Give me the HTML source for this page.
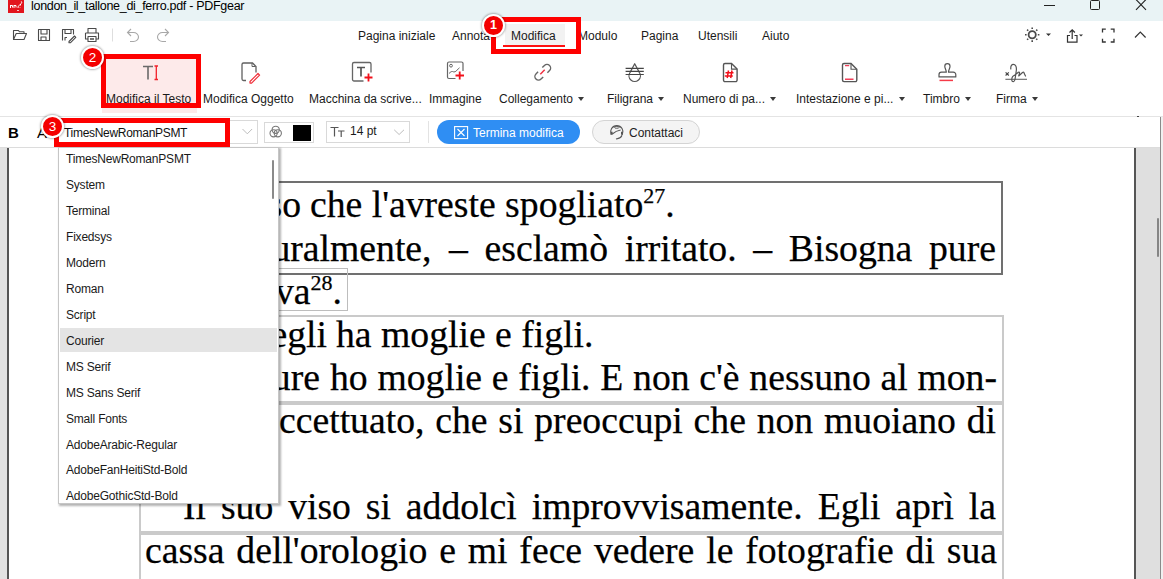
<!DOCTYPE html>
<html><head><meta charset="utf-8">
<style>
*{box-sizing:border-box;margin:0;padding:0}
html,body{width:1163px;height:579px;overflow:hidden;background:#fff;font-family:"Liberation Sans",sans-serif;color:#1f1f1f}
.a{position:absolute}
svg.a{overflow:visible}
.t{position:absolute;white-space:nowrap;font-size:12px;line-height:14px;color:#1a1a1a}
.tab{top:29px}
.lbl{top:92px}
.arr{display:inline-block;width:0;height:0;border-left:3.2px solid transparent;border-right:3.2px solid transparent;border-top:4px solid #3a3a3a;vertical-align:middle;position:relative;top:-1px;margin-left:2px}
.serif{font-family:"Liberation Serif",serif;font-size:37.7px;color:#000;position:absolute;white-space:nowrap;line-height:43px;-webkit-text-stroke:0.25px #000}
.jl{text-align:justify;text-align-last:justify}
.sup{font-size:22px;vertical-align:top;line-height:22px;position:relative;top:2px}
.box{position:absolute;border:1px solid #c8c8c8}
.dd{font-size:12px;position:absolute;left:66px;white-space:nowrap;line-height:14px;color:#1a1a1a;letter-spacing:-0.2px}
.badge{position:absolute;width:23px;height:23px;border-radius:50%;background:#f40000;border:2px solid #fff;box-shadow:0 0 2px 1px rgba(0,0,0,.28);color:#fff;font-size:13.5px;line-height:19px;text-align:center}
.redbox{position:absolute;border:5px solid #fe0000}
</style></head><body>
<!-- title bar -->
<div class="a" style="left:0;top:0;width:1163px;height:21px;background:#e9f3f5"></div>
<div class="a" style="left:8px;top:0;width:16px;height:13px;background:#e2151d"></div>
<svg class="a" style="left:8px;top:0" width="16" height="13"><path d="M2.5 5v3M2.5 5.5h2v2M6 5v3M6 5.5h2v2M10 8c0-2 1-3 2-3M13 1.5c1 0 1 2 -0.5 2.5v1.5M12 7v.5M9.5 10.5h1M10 10v1" stroke="#fff" stroke-width="1" fill="none"/></svg>
<div class="t" style="left:31px;top:-1px;font-size:12.5px;color:#000;letter-spacing:-0.3px">london_il_tallone_di_ferro.pdf - PDFgear</div>
<div class="a" style="left:1044px;top:5px;width:11px;height:1px;background:#222"></div>
<div class="a" style="left:1090px;top:0px;width:10px;height:10px;border:1px solid #222;border-radius:1.5px"></div>
<svg class="a" style="left:1134px;top:-2px" width="14" height="14"><path d="M2 1.5 L12 11.8 M12 1.5 L2 11.8" stroke="#222" stroke-width="1.1"/></svg>

<!-- menu row icons -->
<svg class="a" style="left:0;top:0" width="180" height="50">
  <g stroke="#4a4a4a" stroke-width="1.1" fill="none" stroke-linejoin="round">
    <path d="M13.5 39.5V30.5h5l1 1.3h4.5v1.7"/>
    <path d="M13.5 39.5l2.7-6h10.3l-2.5 6z"/>
    <path d="M38.5 29.5h11v11h-11z"/>
    <path d="M41 29.5v4.5h6v-4.5M41 40.5v-3.5h5v3.5"/>
    <path d="M62.5 40.5v-11h11v5"/>
    <path d="M65 29.5v4h6v-4M65 40.5v-3h2"/>
    <path d="M69 41.5l5.5-5.5 1.3 1.3-5.5 5.5h-1.3z"/>
    <path d="M88 33v-4.5h8V33M85.5 33h13v6h-2.5M88 39h-2.5v-6M88 36.5h8v5h-8z"/>
    <path d="M90 39h4" stroke-width="1.5"/>
  </g>
  <path d="M112.5 28.5v13" stroke="#dedede" stroke-width="1"/>
  <g stroke="#a8a8a8" stroke-width="1.1" fill="none">
    <path d="M131 29l-3.5 3.5 3.5 3.5M127.5 32.5h6a5 4.5 0 0 1 0 9h-3.5"/>
    <path d="M165 29l3.5 3.5-3.5 3.5M168.5 32.5h-6a5 4.5 0 0 0 0 9h3.5"/>
  </g>
</svg>

<!-- tabs -->
<div class="t tab" style="left:358px">Pagina iniziale</div>
<div class="t tab" style="left:452px">Annota</div>
<div class="a" style="left:505px;top:24px;width:60px;height:23px;background:#f2f2f2"></div>
<div class="t tab" style="left:511px">Modifica</div>
<div class="a" style="left:503px;top:45px;width:62px;height:2px;background:#f11"></div>
<div class="t tab" style="left:578px">Modulo</div>
<div class="t tab" style="left:641px">Pagina</div>
<div class="t tab" style="left:698px">Utensili</div>
<div class="t tab" style="left:762px">Aiuto</div>

<!-- right menu icons -->
<svg class="a" style="left:1015px;top:22px" width="148" height="28">
  <g stroke="#4a4a4a" fill="none" stroke-width="1.3">
    <circle cx="17.2" cy="12.7" r="3.6" stroke-width="1.8"/>
    <path d="M17.2 5.5v1.6M17.2 18.3v1.6M10 12.7h1.6M22.8 12.7h1.6M12.1 7.6l1.1 1.1M21.2 16.7l1.1 1.1M12.1 17.8l1.1-1.1M21.2 8.7l1.1-1.1" stroke-width="1.6"/>
  </g>
  <path d="M31 11.5h5l-2.5 2.5z" fill="#333"/>
  <g stroke="#333" fill="none" stroke-width="1.2">
    <path d="M55 13.5h-2.5v6.7h9.5v-6.7h-2.5"/>
    <path d="M57.2 17v-9M54.5 10.5l2.7-2.7 2.7 2.7"/>
  </g>
  <path d="M64 12.5h4l-2 2z" fill="#333"/>
  <g stroke="#333" fill="none" stroke-width="1.3">
    <path d="M87.5 10.5v-3.3h3.3M95.7 7.2h3.3v3.3M99 16.7v3.3h-3.3M90.8 20h-3.3v-3.3"/>
    <path d="M120 15.5l5.3-5.3 5.3 5.3" stroke-width="1.2"/>
  </g>
</svg>

<!-- ribbon -->
<div class="a" style="left:102px;top:55px;width:95px;height:58px;background:#fdeaea"></div>
<svg class="a" style="left:0;top:50px" width="1163" height="40">
  <!-- TI -->
  <path d="M143 16.5h10M148 16.5v13" stroke="#6a6a6a" stroke-width="1.6" fill="none"/>
  <path d="M154.5 16h3.5M154.5 29.5h3.5M156.3 16v13.5" stroke="#f2202a" stroke-width="1.3" fill="none"/>
  <!-- Modifica oggetto -->
  <path d="M246 30.5h-2.5a1.5 1.5 0 0 1-1.5-1.5V14.5a1.5 1.5 0 0 1 1.5-1.5h9l3.5 3.5v6" stroke="#606060" stroke-width="1.3" fill="none"/>
  <path d="M252 13v3.5h3.5" stroke="#606060" stroke-width="1" fill="none"/>
  <path d="M250 31.5l8-8 1.6 1.6-8 8h-1.6z" stroke="#f0303a" stroke-width="1.2" fill="none" stroke-linejoin="round"/>
  <!-- Macchina -->
  <path d="M363.5 31h-9.5a1.5 1.5 0 0 1-1.5-1.5V14a1.5 1.5 0 0 1 1.5-1.5h15.5a1.5 1.5 0 0 1 1.5 1.5v8.5" stroke="#666" stroke-width="1.3" fill="none"/>
  <path d="M357 17.5h8M361 17.5v9" stroke="#555" stroke-width="1.7" fill="none"/>
  <path d="M364.5 27.5h8M368.5 23.5v8" stroke="#f2101a" stroke-width="1.8" fill="none"/>
  <!-- Immagine -->
  <path d="M455.5 28.5h-6.5a1.5 1.5 0 0 1-1.5-1.5V13.5a1.5 1.5 0 0 1 1.5-1.5h12.5a1.5 1.5 0 0 1 1.5 1.5v7.5" stroke="#666" stroke-width="1.2" fill="none"/>
  <circle cx="451" cy="15.7" r="1.4" stroke="#666" stroke-width="1" fill="none"/>
  <path d="M449 23.5c1.5-1.5 2.5-2.2 3.5-2 1 .3 1.5.7 2.5.3 1-.4 2.5-2.3 4.5-4" stroke="#666" stroke-width="1" fill="none"/>
  <path d="M455.5 25.5h8.5M459.7 21.5v8" stroke="#f2101a" stroke-width="1.8" fill="none"/>
  <!-- link -->
  <path d="M542.3 17.6L544.45 15.45A3.6 3.6 0 0 1 549.55 20.55L547.4 22.7M543.2 26.9L541.05 29.05A3.6 3.6 0 0 1 535.95 23.95L538.1 21.8" stroke="#666" stroke-width="1.4" fill="none"/>
  <path d="M540.3 24.2L544.7 19.8" stroke="#f03040" stroke-width="1.5"/>
  <!-- filigrana -->
  <path d="M634.7 13.7l-4.6 8.7a5.7 5.7 0 1 0 9.2 0z" stroke="#555" stroke-width="1.2" fill="none" stroke-linejoin="round"/>
  <path d="M625.6 18.4h18.2M625.6 21.4h18.2M625.6 24.5h18.2" stroke="#444" stroke-width="1.2"/>
  <!-- numero pagina -->
  <path d="M723.5 15a1.5 1.5 0 0 1 1.5-1.5h6.5l5.6 5.6v11a1.5 1.5 0 0 1-1.5 1.5h-10.6a1.5 1.5 0 0 1-1.5-1.5z" stroke="#555" stroke-width="1.4" fill="none"/>
  <path d="M731.5 13.5v5.6h5.6" stroke="#555" stroke-width="1.1" fill="none"/>
  <path d="M728.5 20.5l-1.3 7.5M732 20.5l-1.3 7.5M725.5 22.7h8M724.8 26h8" stroke="#f2101a" stroke-width="1.5" fill="none"/>
  <!-- intestazione -->
  <path d="M842.5 15a1.5 1.5 0 0 1 1.5-1.5h7l5.8 5.8v10.8a1.5 1.5 0 0 1-1.5 1.5h-11.3a1.5 1.5 0 0 1-1.5-1.5z" stroke="#555" stroke-width="1.4" fill="none"/>
  <path d="M851 13.5v5.8h5.8" stroke="#555" stroke-width="1.1" fill="none"/>
  <path d="M845 15.6h4.2M845 29.3h8.5" stroke="#f0405a" stroke-width="1.4"/>
  <!-- timbro -->
  <path d="M946.3 22.2C946.3 20 944.8 18.5 944.8 16.2A2.6 2.6 0 0 1 950 16.2C950 18.5 948.5 20 948.5 22.2H953.3A2.5 2.5 0 0 1 955.8 24.7V26.9H939V24.7A2.5 2.5 0 0 1 941.5 22.2Z" stroke="#555" stroke-width="1.2" fill="none" stroke-linejoin="round"/>
  <path d="M939.5 30.4h13.5" stroke="#f53a48" stroke-width="1.5"/>
  <!-- firma -->
  <path d="M1005.6 22.3l3.2 3.2M1008.8 22.3l-3.2 3.2" stroke="#444" stroke-width="1.1"/>
  <path d="M1005.4 29.3h21.6" stroke="#666" stroke-width="1.1"/>
  <path d="M1010.8 19C1010.5 15.5 1012 14.3 1013.3 14.3C1015.5 14.3 1016.8 17 1016.3 20.5L1015 29.5C1014.5 32 1012 32.5 1011.8 30C1011.6 27.5 1013.5 25.5 1015.2 24.8L1018.3 22.3C1019.5 21.5 1019.8 22.5 1019.3 24L1018.7 26L1022.5 22.5C1023.5 21.8 1024 22.3 1024.2 23.5L1025.5 26" stroke="#555" stroke-width="1.2" fill="none" stroke-linecap="round" stroke-linejoin="round"/>
</svg>
<div class="t lbl" style="left:106px">Modifica il Testo</div>
<div class="t lbl" style="left:203px">Modifica Oggetto</div>
<div class="t lbl" style="left:309px">Macchina da scrive...</div>
<div class="t lbl" style="left:429px">Immagine</div>
<div class="t lbl" style="left:499px">Collegamento <span class="arr"></span></div>
<div class="t lbl" style="left:607px">Filigrana <span class="arr"></span></div>
<div class="t lbl" style="left:683px">Numero di pa... <span class="arr"></span></div>
<div class="t lbl" style="left:796px">Intestazione e pi... <span class="arr"></span></div>
<div class="t lbl" style="left:923px">Timbro <span class="arr"></span></div>
<div class="t lbl" style="left:996px">Firma <span class="arr"></span></div>

<!-- toolbar -->
<div class="a" style="left:0;top:116px;width:1163px;height:1px;background:#e4e4e4"></div>
<div class="a" style="left:0;top:147px;width:1163px;height:1px;background:#dcdcdc"></div>
<div class="t" style="left:8px;top:124px;font-size:15px;line-height:17px;font-weight:bold;color:#000">B</div>
<div class="t" style="left:37px;top:124px;font-size:15px;line-height:17px;color:#000">A</div>
<div class="a" style="left:57px;top:120px;width:201px;height:24px;border:1px solid #d9d9d9"></div>
<div class="t" style="left:64px;top:126px;color:#111;letter-spacing:-0.3px">TimesNewRomanPSMT</div>
<svg class="a" style="left:0;top:116px" width="420" height="32">
  <path d="M242.5 13l4.8 4.8 4.8-4.8" stroke="#bdbdbd" stroke-width="1" fill="none"/>
  <g stroke="#777" stroke-width="1.1" fill="none"><circle cx="275.7" cy="13.8" r="3.6"/><circle cx="273.6" cy="17.3" r="3.6"/><circle cx="277.8" cy="17.3" r="3.6"/></g>
  <path d="M394.2 13.8l4.9 4.7 4.9-4.7" stroke="#bdbdbd" stroke-width="1" fill="none"/>
  <path d="M330.5 11.5h8M334.5 11.5v9M338 15h6.5M341.2 15v6" stroke="#555" stroke-width="1.2" fill="none"/>
</svg>
<div class="a" style="left:264px;top:122px;width:50px;height:21px;border:1px solid #d9d9d9"></div>
<div class="a" style="left:293px;top:125px;width:18px;height:16px;background:#000"></div>
<div class="a" style="left:326px;top:121px;width:84px;height:22px;border:1px solid #d9d9d9"></div>
<div class="t" style="left:350px;top:124px">14 pt</div>
<div class="a" style="left:428px;top:121px;width:1px;height:22px;background:#e3e3e3"></div>
<div class="a" style="left:437px;top:120px;width:143px;height:24px;border-radius:12px;background:#2f8ef3"></div>
<svg class="a" style="left:454px;top:126px" width="15" height="14"><rect x="0.6" y="0.6" width="13" height="12" fill="none" stroke="#fff" stroke-width="1.1"/><path d="M3.5 3l7 7M10.5 3l-7 7" stroke="#fff" stroke-width="1.1"/></svg>
<div class="t" style="left:473px;top:126px;color:#fff">Termina modifica</div>
<div class="a" style="left:592px;top:120px;width:108px;height:24px;border-radius:12px;background:#f4f4f4;border:1px solid #d4d4d4"></div>
<svg class="a" style="left:609px;top:124px" width="16" height="16"><g stroke="#555" fill="none" stroke-width="1.1"><path d="M2.2 10.5A6.2 6.2 0 1 1 13.4 10.5"/><path d="M2.6 7.8v3M13 7.8v3" stroke-width="2"/><path d="M3.3 10Q7 6.8 11.6 6"/><path d="M13 11.2Q12 14 8.6 14.6l-1.6.4"/><ellipse cx="7.8" cy="3.4" rx="2.4" ry="0.9" stroke-width="0.9"/></g></svg>
<div class="t" style="left:629px;top:126px;color:#222">Contattaci</div>

<!-- document -->
<div class="a" style="left:0;top:148px;width:8px;height:431px;background:#e2e2e2"></div>
<div class="a" style="left:7px;top:148px;width:2px;height:431px;background:#555"></div>
<div class="a" style="left:1134px;top:148px;width:2px;height:431px;background:#555"></div>
<div class="a" style="left:1136px;top:148px;width:24px;height:431px;background:#dfdfdf"></div>
<div class="a" style="left:1160px;top:117px;width:1px;height:462px;background:#8a8a8a"></div>
<div class="a" style="left:1161px;top:117px;width:2px;height:462px;background:#f0f0f0"></div>
<div class="a" style="left:1157px;top:218px;width:2px;height:39px;background:#858585;border-radius:1px"></div>
<div class="a" style="left:1137px;top:116px;width:2px;height:1px;background:#444"></div>

<!-- text boxes -->
<div class="box" style="left:139px;top:181px;width:864px;height:94px;border:2px solid #707070"></div>
<div class="box" style="left:139px;top:268px;width:209px;height:43px;border:1px solid #bdbdbd"></div>
<div class="box" style="left:139px;top:315px;width:865px;height:88px;border:2px solid #cacaca"></div>
<div class="box" style="left:139px;top:401px;width:865px;height:132px;border:2px solid #cacaca;border-top-width:4px"></div>
<div class="box" style="left:139px;top:531px;width:865px;height:60px;border:2px solid #cacaca;border-top-width:4px"></div>

<div class="serif" style="left:310px;top:183px">che l'avreste spogliato<span class="sup">27</span>.</div>
<div class="serif" style="right:862px;top:183px">Penso</div>
<div class="serif" style="right:731.5px;top:227px">Naturalmente,</div>
<div class="serif jl" style="left:449px;width:547px;top:227px">– esclamò irritato. – Bisogna pure</div>
<div class="serif" style="right:821px;top:270px">va<span class="sup">28</span>.</div>
<div class="serif" style="left:336px;top:313px">ha moglie e figli.</div>
<div class="serif" style="right:836px;top:313px">egli</div>
<div class="serif" style="right:843px;top:356px">Pure</div>
<div class="serif jl" style="left:330px;width:667px;top:356px">ho moglie e figli. E non c'è nessuno al mon-</div>
<div class="serif jl" style="left:279px;width:717px;top:399px">ccettuato, che si preoccupi che non muoiano di</div>
<div class="serif jl" style="left:183px;width:813px;top:485px">Il suo viso si addolcì improvvisamente. Egli aprì la</div>
<div class="serif jl" style="left:145px;width:852px;top:529px">cassa dell'orologio e mi fece vedere le fotografie di sua</div>

<!-- dropdown -->
<div class="a" style="left:58px;top:147px;width:221px;height:357px;background:#fff;border:1px solid #c6c6c6;box-shadow:1px 1px 2px 0.5px rgba(0,0,0,.3)"></div>
<div class="a" style="left:271.5px;top:160px;width:2.5px;height:39px;background:#8a8a8a;border-radius:1px"></div>
<div class="dd" style="top:152px">TimesNewRomanPSMT</div>
<div class="dd" style="top:178px">System</div>
<div class="dd" style="top:204px">Terminal</div>
<div class="dd" style="top:230px">Fixedsys</div>
<div class="dd" style="top:256px">Modern</div>
<div class="dd" style="top:282px">Roman</div>
<div class="dd" style="top:308px">Script</div>
<div class="a" style="left:60px;top:328px;width:217px;height:24px;background:#e4e4e4"></div>
<div class="dd" style="top:334px">Courier</div>
<div class="dd" style="top:360px">MS Serif</div>
<div class="dd" style="top:386px">MS Sans Serif</div>
<div class="dd" style="top:412px">Small Fonts</div>
<div class="dd" style="top:438px">AdobeArabic-Regular</div>
<div class="dd" style="top:463px">AdobeFanHeitiStd-Bold</div>
<div class="dd" style="top:489px">AdobeGothicStd-Bold</div>

<!-- annotations -->
<div class="redbox" style="left:491px;top:17px;width:90px;height:37px"></div>
<div class="redbox" style="left:101px;top:54px;width:100px;height:54px"></div>
<div class="redbox" style="left:54px;top:118px;width:176px;height:29px"></div>
<div class="badge" style="left:482px;top:13.5px;font-weight:bold;font-size:12.5px">1</div>
<div class="badge" style="left:81px;top:46px">2</div>
<div class="badge" style="left:41px;top:115px">3</div>
</body></html>
